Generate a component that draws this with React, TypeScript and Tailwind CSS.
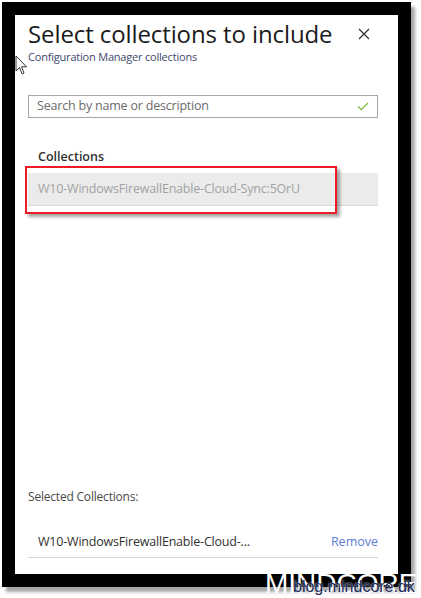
import React from "react";

function Cursor() {
  return (
    <svg
      className="absolute left-[15px] top-[55px]"
      width="13"
      height="21"
      viewBox="0 0 13 21"
    >
      <path
        d="M1 1 L1 16 L4.5 12.5 L7 19 L9 18 L6.5 11.8 L11.5 11.8 Z"
        fill="#fff"
        stroke="#333"
        strokeWidth="1"
        strokeLinejoin="round"
      />
    </svg>
  );
}

export default function App() {
  const font = { fontFamily: '"Open Sans", "Noto Sans", Arial, sans-serif' };
  return (
    <div
      className="relative h-[598px] w-[421px] overflow-hidden bg-white"
      style={font}
    >
      <div className="ml-[2px] mt-[2px] h-[585px] w-[409px] bg-black p-[13px] shadow-[4px_5px_3px_rgba(0,0,0,0.35)]">
        <div className="relative flex h-full w-full flex-col bg-white px-[13px]">
          {/* header */}
          <div className="flex items-start justify-between pt-[3px]">
            <h1 className="text-[24px] leading-[32px] tracking-[-0.1px] text-[#1b1b1b]">
              Select collections to include
            </h1>
            <svg
              className="mr-[15px] mt-[10px]"
              width="12"
              height="12"
              viewBox="0 0 12 12"
            >
              <path
                d="M1 1 L11 11 M11 1 L1 11"
                stroke="#333"
                strokeWidth="1.3"
              />
            </svg>
          </div>
          <p className="mt-[0px] text-[11px] leading-[14px] tracking-[-0.2px] text-[#40496b]">
            Configuration Manager collections
          </p>

          {/* search */}
          <div className="mt-[31px] flex h-[23px] w-[350px] items-center justify-between border border-[#a6a6a6] px-[8px]">
            <span className="text-[12.5px] tracking-[-0.2px] text-[#6b6b6b]">
              Search by name or description
            </span>
            <svg width="12" height="9" viewBox="0 0 12 9">
              <path
                d="M1 4.5 L4.2 7.7 L11 1"
                fill="none"
                stroke="#7fba3a"
                strokeWidth="1.3"
              />
            </svg>
          </div>

          {/* collections */}
          <div className="mt-[31px] w-[350px]">
            <div className="pl-[10px] text-[12.5px] font-semibold leading-[16px] text-[#323130]">
              Collections
            </div>
            <div className="mt-[8px] flex h-[33px] items-center border-b border-[#d8d8d8] bg-[#ebebeb] pl-[10px]">
              <span className="text-[12.5px] tracking-[-0.2px] text-[#a3a3a3]">
                W10-WindowsFirewallEnable-Cloud-Sync:5OrU
              </span>
            </div>
          </div>

          <div className="flex-1" />

          {/* selected */}
          <div className="mb-[16px] w-[350px]">
            <div className="text-[12px] leading-[16px] tracking-[-0.2px] text-[#4a4a4a]">
              Selected Collections:
            </div>
            <div className="mt-[23px] flex h-[30px] items-center justify-between border-b border-[#d6d6d6] pl-[10px]">
              <span className="text-[12.5px] tracking-[-0.2px] text-[#323130]">
                W10-WindowsFirewallEnable-Cloud-...
              </span>
              <span className="text-[12.5px] text-[#5b7bd5]">Remove</span>
            </div>
          </div>

          {/* annotation box */}
          <div className="absolute left-[10px] top-[151px] h-[48px] w-[312px] border-2 border-[#ee1c24] shadow-[3px_3px_3px_rgba(0,0,0,0.35)]" />
        </div>
      </div>

      <Cursor />

      {/* watermark */}
      <div
        className="absolute left-[265px] top-[568px] whitespace-nowrap text-[28px] leading-[32px] text-white"
        style={{ fontFamily: '"Liberation Sans", Arial, sans-serif' }}
      >
        MINDCORE
      </div>
      <div
        className="absolute left-[293px] top-[578px] whitespace-nowrap text-[16px] leading-[18px] text-[#1a2a5a] [text-shadow:0_0_2px_#fff]"
        style={{ fontFamily: '"Liberation Sans", Arial, sans-serif' }}
      >
        blog.mindcore.dk
      </div>
    </div>
  );
}
